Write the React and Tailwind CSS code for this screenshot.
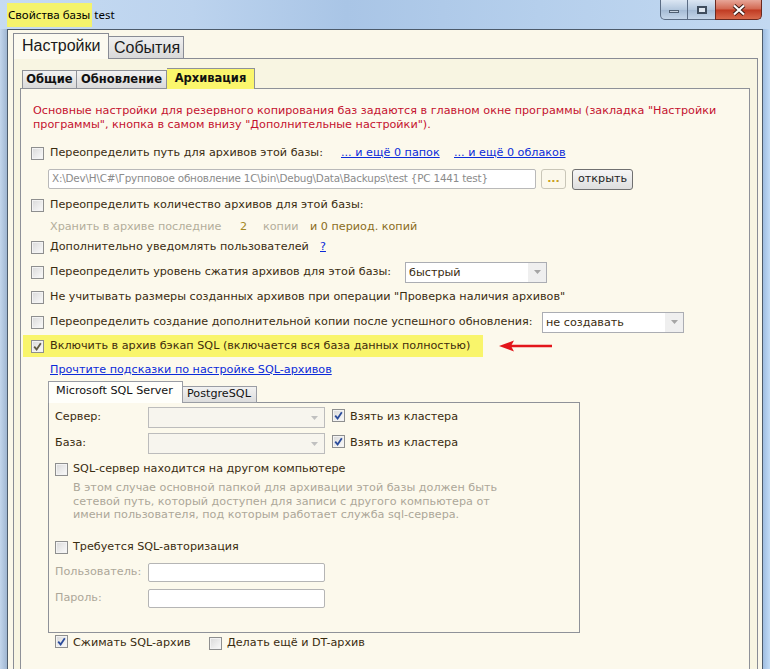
import React from "react";

const Check = ({ checked, tone = "blue" }) => (
  <span className="inline-flex h-[13px] w-[13px] shrink-0 items-center justify-center border border-[#8e8f8f] bg-[linear-gradient(135deg,#d9d9d9,#fbfbfb)] shadow-[inset_0_0_0_1px_#f3f3f3]">
    {checked ? (
      <svg width="9" height="9" viewBox="0 0 9 9">
        <path
          d="M1.2 4.6 L3.6 7.4 L7.8 1.2"
          fill="none"
          stroke={tone === "blue" ? "#2b4c9b" : "#5f5a44"}
          strokeWidth="1.8"
        />
      </svg>
    ) : null}
  </span>
);

const Arrow = ({ dim }) => (
  <span className="flex w-[19px] items-center justify-center self-stretch">
    <svg width="7" height="4" viewBox="0 0 7 4">
      <path d="M0 0 L7 0 L3.5 4 Z" fill={dim ? "#c0c0c0" : "#9a9a9a"} />
    </svg>
  </span>
);

const Select = ({ value, className = "" }) => (
  <div className={"flex h-[21px] w-[142px] border border-[#abadb3] bg-white " + className}>
    <span className="flex-1 pl-[3px] leading-[19px] text-[#3a2c10]">{value}</span>
    <span className="flex w-[19px] items-center justify-center border-l border-white bg-[#efefef]">
      <svg width="7" height="4" viewBox="0 0 7 4">
        <path d="M0 0 L7 0 L3.5 4 Z" fill="#a5a5a5" />
      </svg>
    </span>
  </div>
);

const Row = ({ className = "", children }) => (
  <div className={"flex h-[20px] items-center " + className}>{children}</div>
);

const Link = ({ children, className = "" }) => (
  <span className={"text-[#0b2bd9] underline " + className}>{children}</span>
);

export default function App() {
  return (
    <div className="flex h-[669px] w-[770px] flex-col overflow-hidden bg-[#b7cfea] font-['DejaVu_Sans',sans-serif] text-[11.2px] text-[#3a2c10]">
      {/* title bar */}
      <div className="flex h-[29px] shrink-0 items-start justify-between bg-[linear-gradient(90deg,#c6dbf2_0%,#bcd3ee_25%,#a9c5e6_45%,#b5cfec_70%,#c3d9f1_100%)]">
        <div className="ml-[7px] mt-[3px] flex h-[24px] items-center font-['Noto_Sans',sans-serif] text-[11.5px] text-black">
          <span className="flex h-full items-center bg-[#f4f36c] pl-[1px] pr-[2px]">Свойства базы</span>
          <span className="ml-[2px]">test</span>
        </div>
        <div className="mr-[8px] flex h-[20px]">
          <div className="flex w-[28px] items-center justify-center rounded-bl-[5px] border border-t-0 border-[#5a6c84] bg-[linear-gradient(#dbe6f3,#b4c8de_50%,#a3b9d3_51%,#c4d6ea)]">
            <span className="mt-[4px] h-[3px] w-[10px] border border-[#4f5f72] bg-[#c7d3e0]" />
          </div>
          <div className="flex w-[27px] items-center justify-center border-b border-[#5a6c84] bg-[linear-gradient(#dbe6f3,#b4c8de_50%,#a3b9d3_51%,#c4d6ea)]">
            <span className="h-[8px] w-[10px] border-2 border-[#3f4d5e] bg-[#dfe7f0]" />
          </div>
          <div className="flex w-[47px] items-center justify-center rounded-br-[5px] border border-t-0 border-[#6b2a20] bg-[linear-gradient(#e7a698,#d26750_48%,#c03a22_52%,#d86a4c)]">
            <svg width="14" height="12" viewBox="0 0 14 12">
              <path d="M2 1.5 L12 10.5 M12 1.5 L2 10.5" stroke="#3b1a14" strokeWidth="4" />
              <path d="M2 1.5 L12 10.5 M12 1.5 L2 10.5" stroke="#ffffff" strokeWidth="2.2" />
            </svg>
          </div>
        </div>
      </div>

      {/* window body */}
      <div className="flex flex-1">
        <div className="w-[7px] shrink-0 bg-[linear-gradient(90deg,#c3d6ec,#9fb6d1)]" />
        <div className="flex w-[756px] flex-col border border-b-0 border-[#4d5b6b] bg-[#fbf8ea] pl-[5px] pt-[3px]">
          {/* outer tabs */}
          <div className="relative z-10 -mb-px flex h-[26px] items-end font-['Liberation_Sans',sans-serif] text-[16px] text-[#1a1a1a]">
            <div className="flex h-[26px] w-[96px] items-center border border-b-0 border-[#898c95] bg-[#fcfaf0] pl-[8px] pb-[2px]">
              Настройки
            </div>
            <div className="flex h-[23px] w-[75px] items-center border border-l-0 border-[#898c95] bg-[linear-gradient(#f0f0f0,#d9d9d9)] pl-[5px]">
              События
            </div>
          </div>

          {/* outer panel */}
          <div className="flex w-[745px] flex-1 flex-col border border-b-0 border-[#898c95] bg-[#f8f5e2] pl-[6px] pt-[9px]">
            {/* inner tabs */}
            <div className="relative z-10 -mb-px ml-[2px] flex h-[21px] items-end text-[11.5px] font-bold text-[#111]">
              <div className="flex h-[19px] w-[55px] items-center justify-center border border-[#8e9198] bg-[linear-gradient(#f2f2f2,#dadada)] pt-[1px]">
                Общие
              </div>
              <div className="flex h-[19px] w-[90px] items-center justify-center border border-l-0 border-[#8e9198] bg-[linear-gradient(#f2f2f2,#dadada)] pt-[1px]">
                Обновление
              </div>
              <div className="flex h-[21px] w-[88px] items-center justify-center border border-b-0 border-l-0 border-[#8e9198] bg-[#fbf66c] pb-[1px]">
                Архивация
              </div>
            </div>

            {/* inner panel */}
            <div className="flex w-[730px] flex-1 flex-col border border-b-0 border-[#8e9198] bg-[#fcf9ec] pl-[10px] pt-[15px]">
              <div className="ml-[2px] leading-[14px] text-[#c4122f]">
                Основные настройки для резервного копирования баз задаются в главном окне программы (закладка "Настройки
                <br />
                программы", кнопка в самом внизу "Дополнительные настройки").
              </div>

              <Row className="mt-[11px]">
                <Check />
                <span className="ml-[6px] w-[291px]">Переопределить путь для архивов этой базы:</span>
                <Link className="w-[113px]">... и ещё 0 папок</Link>
                <Link>... и ещё 0 облаков</Link>
              </Row>

              <Row className="mt-[6px]">
                <div className="ml-[17px] flex h-[20px] w-[488px] items-center overflow-hidden whitespace-nowrap rounded-[2px] border border-[#b9b9b9] bg-white pl-[3px] text-[10.4px] tracking-[-0.2px] text-[#8b8b8b]">
                  X:\Dev\H\C#\Групповое обновление 1C\bin\Debug\Data\Backups\test {"{"}PC 1441 test{"}"}
                </div>
                <div className="ml-[5px] flex h-[20px] w-[25px] items-center justify-center rounded-[3px] border border-[#c9c6b8] bg-[#fbf8ec] font-bold text-[#c9a022]">
                  ...
                </div>
                <div className="ml-[6px] flex h-[21px] w-[61px] items-center justify-center rounded-[3px] border border-[#707070] bg-[linear-gradient(#f6f6f6,#dedede)] text-[#222]">
                  открыть
                </div>
              </Row>

              <Row className="mt-[6px]">
                <Check />
                <span className="ml-[6px]">Переопределить количество архивов для этой базы:</span>
              </Row>

              <Row className="mt-[2px]">
                <span className="ml-[19px] w-[190px] text-[#b3ae9b]">Хранить в архиве последние</span>
                <span className="w-[23px] text-[#a38722]">2</span>
                <span className="w-[47px] text-[#b3ae9b]">копии</span>
                <span className="text-[#8a6c1c]">и 0 период. копий</span>
              </Row>

              <Row>
                <Check />
                <span className="ml-[6px] w-[270px]">Дополнительно уведомлять пользователей</span>
                <Link>?</Link>
              </Row>

              <Row className="mt-[5px]">
                <Check />
                <span className="ml-[6px] w-[355px]">Переопределить уровень сжатия архивов для этой базы:</span>
                <Select value="быстрый" />
              </Row>

              <Row className="mt-[5px]">
                <Check />
                <span className="ml-[6px]">
                  Не учитывать размеры созданных архивов при операции "Проверка наличия архивов"
                </span>
              </Row>

              <Row className="mt-[5px]">
                <Check />
                <span className="ml-[6px] w-[492px]">
                  Переопределить создание дополнительной копии после успешного обновления:
                </span>
                <Select value="не создавать" />
              </Row>

              <div className="mt-[3px] flex h-[22px] items-center">
                <div className="-ml-[8px] flex h-[22px] w-[460px] items-center bg-[#f9f56b] pl-[8px] pt-[1px]">
                  <Check checked tone="gray" />
                  <span className="ml-[6px] text-[#3f2c0c]">
                    Включить в архив бэкап SQL (включается вся база данных полностью)
                  </span>
                </div>
                <svg className="ml-[16px]" width="54" height="14" viewBox="0 0 54 14">
                  <path d="M12 7 L53 7" stroke="#e3161b" strokeWidth="2.4" />
                  <path d="M0 7 L15 1.5 L12 7 L15 12.5 Z" fill="#e3161b" />
                </svg>
              </div>

              <Row className="mt-[3px]">
                <Link className="ml-[19px]">Прочтите подсказки по настройке SQL-архивов</Link>
              </Row>

              {/* SQL tabs */}
              <div className="relative z-10 -mb-px ml-[17px] mt-[1px] flex h-[22px] items-end text-[#111]">
                <div className="flex h-[22px] w-[135px] items-center border border-b-0 border-[#9a9da4] bg-[#fffffb] pl-[7px] pb-[2px]">
                  Microsoft SQL Server
                </div>
                <div className="flex h-[17px] w-[74px] items-center border border-l-0 border-[#9a9da4] bg-[linear-gradient(#f2f2f2,#dcdcdc)] pl-[4px]">
                  PostgreSQL
                </div>
              </div>

              {/* SQL panel */}
              <div className="ml-[17px] flex w-[532px] flex-col border border-[#8f9299] bg-[#fcf9ec] pb-[23px] pl-[6px] pt-[4px]">
                <div className="flex h-[21px] items-center">
                  <span className="w-[93px]">Сервер:</span>
                  <div className="flex h-[21px] w-[177px] justify-end border border-[#bcbcbc] bg-[#f7f5ee]">
                    <Arrow dim />
                  </div>
                  <span className="ml-[7px]">
                    <Check checked />
                  </span>
                  <span className="ml-[5px]">Взять из кластера</span>
                </div>
                <div className="mt-[5px] flex h-[21px] items-center">
                  <span className="w-[93px]">База:</span>
                  <div className="flex h-[21px] w-[177px] justify-end border border-[#bcbcbc] bg-[#f7f5ee]">
                    <Arrow dim />
                  </div>
                  <span className="ml-[7px]">
                    <Check checked />
                  </span>
                  <span className="ml-[5px]">Взять из кластера</span>
                </div>
                <Row className="mt-[5px]">
                  <Check />
                  <span className="ml-[5px]">SQL-сервер находится на другом компьютере</span>
                </Row>
                <div className="ml-[18px] mt-[2px] leading-[13.5px] text-[#aca799]">
                  В этом случае основной папкой для архивации этой базы должен быть
                  <br />
                  сетевой путь, который доступен для записи с другого компьютера от
                  <br />
                  имени пользователя, под которым работает служба sql-сервера.
                </div>
                <Row className="mt-[16px]">
                  <Check />
                  <span className="ml-[5px]">Требуется SQL-авторизация</span>
                </Row>
                <Row className="mt-[5px]">
                  <span className="w-[93px] text-[#aca799]">Пользователь:</span>
                  <div className="h-[19px] w-[177px] rounded-[2px] border border-[#b5b5b5] bg-white" />
                </Row>
                <Row className="mt-[6px]">
                  <span className="w-[93px] text-[#aca799]">Пароль:</span>
                  <div className="h-[19px] w-[177px] rounded-[2px] border border-[#b5b5b5] bg-white" />
                </Row>
              </div>

              <Row className="mt-[1px]">
                <span className="ml-[24px]">
                  <Check checked />
                </span>
                <span className="ml-[5px] w-[136px]">Сжимать SQL-архив</span>
                <Check />
                <span className="ml-[5px]">Делать ещё и DT-архив</span>
              </Row>
            </div>
          </div>
        </div>
        <div className="w-[7px] shrink-0 bg-[linear-gradient(90deg,#9fbde0,#c2dcf7)]" />
      </div>
    </div>
  );
}
